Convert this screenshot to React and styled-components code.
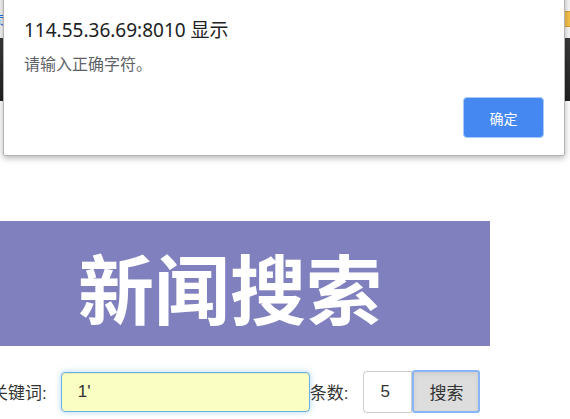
import React from 'react'
import styled, { createGlobalStyle } from 'styled-components';

const GlobalStyle = createGlobalStyle`
    html, body {
        margin: 0;
        padding: 0;
        background: #ffffff;
        overflow: hidden;
    }
    body {
        font-family: "Liberation Sans", "Noto Sans CJK SC", sans-serif;
        color: #333333;
    }
`

const App = () => {
    return (
        <Page>
            <GlobalStyle />
            <TopStrip>
                <span className="link">首页</span>
                <span className="folder" />
            </TopStrip>
            <NavBar />
            <Content>
                <Banner>新闻搜索</Banner>
                <SearchForm onSubmit={(e) => e.preventDefault()}>
                    <Label gap="14px">关键词:</Label>
                    <KeywordInput defaultValue="1'" />
                    <Label gap="15px">条数:</Label>
                    <CountInput defaultValue="5" />
                    <SearchButton type="submit">搜索</SearchButton>
                </SearchForm>
            </Content>
            <Alert>
                <div className="title">114.55.36.69:8010 显示</div>
                <div className="message">请输入正确字符。</div>
                <div className="actions">
                    <OkButton>确定</OkButton>
                </div>
            </Alert>
        </Page>
    )
}

const Page = styled.div`
    position: relative;
    width: 570px;
    height: 419px;
    overflow: hidden;
`

const TopStrip = styled.div`
    height: 38px;
    background: #f7f7f7;
    display: flex;
    align-items: center;
    justify-content: space-between;
    .link {
        color: #1a73e8;
        font-size: 13px;
        margin-left: -20px;
    }
    .folder {
        width: 14px;
        height: 14px;
        margin-right: -7px;
        background: #f5c24a;
        border: 1px solid #d9a431;
        border-radius: 2px;
    }
`

const NavBar = styled.div`
    height: 63px;
    background: linear-gradient(#3a3a3a, #222222);
`

const Content = styled.div`
    padding-top: 120px;
`

const Banner = styled.div`
    width: 490px;
    height: 125px;
    background: #8080bf;
    color: #ffffff;
    font-family: "Noto Sans CJK SC", sans-serif;
    font-weight: 700;
    font-size: 76px;
    line-height: 1;
    display: flex;
    align-items: center;
    padding-left: 78px;
    padding-top: 4px;
    box-sizing: border-box;
`

const SearchForm = styled.form`
    display: flex;
    align-items: center;
    margin: 24px 0 0 -9px;
`

const Label = styled.label`
    font-size: 17px;
    color: #333333;
    margin-right: ${props => props.gap};
    white-space: nowrap;
`

const KeywordInput = styled.input`
    width: 249px;
    height: 40px;
    box-sizing: border-box;
    padding: 0 16px;
    font-family: "Liberation Sans", sans-serif;
    font-size: 17px;
    color: #333333;
    background: #fafec2;
    border: 1px solid #66afe9;
    border-radius: 4px;
    box-shadow: inset 0 1px 1px rgba(0,0,0,0.075), 0 0 6px rgba(102,175,233,0.5);
    outline: none;
`

const CountInput = styled.input`
    width: 49px;
    height: 42px;
    box-sizing: border-box;
    padding: 0 0 0 16px;
    font-family: "Liberation Sans", sans-serif;
    font-size: 17px;
    color: #333333;
    background: #ffffff;
    border: 1px solid #cccccc;
    border-radius: 4px 0 0 4px;
    outline: none;
`

const SearchButton = styled.button`
    width: 68px;
    height: 43px;
    box-sizing: border-box;
    font-family: "Noto Sans CJK SC", sans-serif;
    font-size: 17px;
    color: #333333;
    background: #dddddd;
    border: 2px solid #8ab4f8;
    border-radius: 3px;
    padding: 0;
    box-shadow: inset 0 2px 4px rgba(0,0,0,0.08);
`

const Alert = styled.div`
    position: absolute;
    top: -12px;
    left: 3px;
    width: 562px;
    height: 168px;
    box-sizing: border-box;
    background: #ffffff;
    border: 1px solid #b5b5b5;
    border-radius: 2px;
    box-shadow: 0 2px 6px rgba(0,0,0,0.3);
    padding: 29px 20px 0 20px;
    font-family: "Noto Sans", "Noto Sans CJK SC", sans-serif;
    .title {
        font-size: 19px;
        color: #202124;
        line-height: 24px;
    }
    .message {
        margin-top: 12px;
        font-size: 16px;
        color: #5f6368;
        line-height: 20px;
    }
    .actions {
        display: flex;
        justify-content: flex-end;
        margin-top: 23px;
    }
`

const OkButton = styled.button`
    width: 81px;
    height: 41px;
    box-sizing: border-box;
    background: #4688f1;
    color: #ffffff;
    font-family: "Noto Sans CJK SC", sans-serif;
    font-size: 14px;
    border: 1px solid #a8c7fa;
    border-radius: 4px;
    padding: 0;
`

export default App
